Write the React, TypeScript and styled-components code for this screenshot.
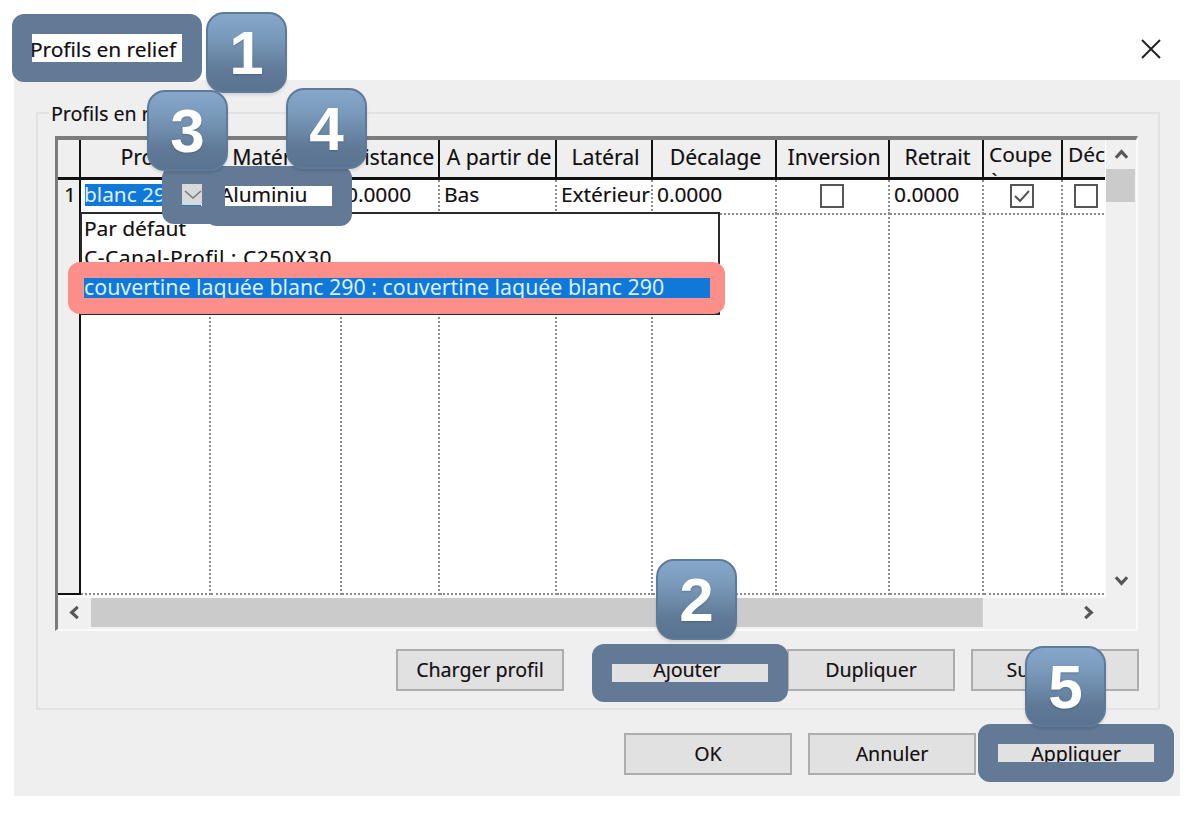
import React from "react";
import styled, { createGlobalStyle } from "styled-components";

const UI_FONT = `"Noto Sans", "Open Sans", sans-serif`;

const columnTemplate = "23px 130px 131px 98px 117px 96px 124px 113px 94px 79px 88px";

const headers = [
  "Profil",
  "Matériau",
  "Distance",
  "A partir de",
  "Latéral",
  "Décalage",
  "Inversion",
  "Retrait",
  "Coupe à",
  "Décalé"
];

const Global = createGlobalStyle`
  html, body { margin: 0; padding: 0; background: #fff; }
  body { font-family: ${UI_FONT}; color: #111; }
`;

const Page = styled.div`
  position: relative;
  width: 1204px;
  height: 814px;
  overflow: hidden;
  background: #fff;
  font-size: 19.5px;
  text-shadow: 0.4px 0 0.5px rgba(60, 20, 60, 0.35);
`;

const TitleBar = styled.div`
  height: 80px;
  display: flex;
  align-items: flex-start;
  justify-content: space-between;
  box-sizing: border-box;
  padding: 36px 43px 0 30px;
`;

const TitleText = styled.div`
  font-size: 20.8px;
  line-height: 26px;
`;

const CloseIcon = styled.svg`
  width: 20px;
  height: 20px;
  margin-top: 3px;
`;

const Panel = styled.div`
  width: 1166px;
  height: 716px;
  margin-left: 14px;
  box-sizing: border-box;
  padding: 32px 20px 0 22px;
  background: #efefef;
`;

const GroupBox = styled.div`
  position: relative;
  height: 598px;
  box-sizing: border-box;
  padding: 22px 20px 0 17px;
  border: 2px solid #e2e2e2;
`;

const Legend = styled.div`
  position: absolute;
  left: 11px;
  top: -12px;
  padding: 0 2px;
  line-height: 24px;
  background: #efefef;
`;

const TableFrame = styled.div`
  height: 495px;
  box-sizing: border-box;
  display: flex;
  flex-direction: column;
  border-top: 4px solid #7c7c7c;
  border-left: 3px solid #7c7c7c;
  border-right: 2px solid #fafafa;
  border-bottom: 2px solid #fafafa;
  background: #f0f0f0;
`;

const TableBody = styled.div`
  height: 458px;
  display: flex;
`;

const Grid = styled.div`
  width: 1047px;
  height: 455px;
  display: flex;
  flex-direction: column;
  overflow: hidden;
  background: #fff;
  border-bottom: 3px solid #fafafa;
  font-size: 20.8px;
`;

const Row = styled.div<{ $fill?: boolean; $height?: number }>`
  display: grid;
  grid-template-columns: ${columnTemplate};
  flex: ${(p) => (p.$fill ? "1" : "none")};
  height: ${(p) => (p.$height ? `${p.$height}px` : "auto")};
`;

const HeaderCell = styled.div<{ $top?: boolean }>`
  box-sizing: border-box;
  overflow: hidden;
  display: flex;
  justify-content: ${(p) => (p.$top ? "flex-start" : "center")};
  align-items: ${(p) => (p.$top ? "flex-start" : "center")};
  padding: ${(p) => (p.$top ? "1px 0 0 5px" : "0 0 4px 3px")};
  font-size: ${(p) => (p.$top ? "20.8px" : "21.1px")};
  line-height: 26px;
  background: #efefef;
  border-right: 2px solid #111;
  border-bottom: 3px solid #111;
  white-space: ${(p) => (p.$top ? "normal" : "nowrap")};
`;

const RowHeadCell = styled.div<{ $last?: boolean }>`
  box-sizing: border-box;
  display: flex;
  align-items: center;
  padding-left: 6px;
  padding-bottom: 5px;
  background: #efefef;
  border-right: 2px solid #111;
  border-bottom: 2px solid ${(p) => (p.$last ? "#111" : "#333")};
`;

const Cell = styled.div<{ $center?: boolean; $inset?: number }>`
  box-sizing: border-box;
  display: flex;
  align-items: center;
  justify-content: ${(p) => (p.$center ? "center" : "flex-start")};
  padding-left: ${(p) => (p.$center ? 0 : p.$inset ?? 4)}px;
  padding-right: ${(p) => (p.$center ? 2 : 0)}px;
  padding-bottom: 5px;
  white-space: nowrap;
  overflow: hidden;
  border-right: 2px dotted #8c8c8c;
  border-bottom: 2px dotted #8c8c8c;
`;

const FirstCell = styled(Cell)`
  position: relative;
  padding-left: 4px;
  padding-bottom: 3px;
  justify-content: space-between;
`;

const SelectedValue = styled.span`
  display: block;
  height: 22px;
  line-height: 21px;
  width: 116px;
  text-indent: -1px;
  background: #0f78d8;
  color: #dff0ff;
  text-shadow: none;
`;

const ComboButton = styled.span`
  position: absolute;
  left: 100px;
  top: 3px;
  width: 24px;
  height: 22px;
  display: flex;
  align-items: center;
  justify-content: center;
  background: #d9d9d9;
`;

const Checkbox = styled.span`
  width: 24px;
  height: 24px;
  box-sizing: border-box;
  display: flex;
  align-items: center;
  justify-content: center;
  margin-top: 3px;
  background: #fff;
  border: 2px solid #555;
`;

const BodyCell = styled.div`
  box-sizing: border-box;
  border-right: 2px dotted #8c8c8c;
  border-bottom: 2px dotted #8c8c8c;
`;

const Dropdown = styled.div`
  position: absolute;
  left: 80px;
  top: 212px;
  width: 640px;
  height: 103px;
  box-sizing: border-box;
  padding: 0 7px 0 2px;
  background: #fff;
  border: 2px solid #2a2a2a;
  font-size: 20.8px;
  line-height: 29px;
`;

const DropdownItem = styled.div<{ $selected?: boolean; $spacing?: number }>`
  height: 29px;
  white-space: nowrap;
  letter-spacing: ${(p) => p.$spacing ?? 0}px;
  ${(p) =>
    p.$selected
      ? `background: #0f78d8; color: #dcefff; text-shadow: none; height: 20px; line-height: 18px; margin-top: 6px; margin-right: 1px; border-bottom: 2px solid #e8111b; font-size: 21.35px;`
      : ""}
`;

const VScroll = styled.div`
  width: 31px;
  display: flex;
  flex-direction: column;
  border-left: 1px solid #fff;
  box-sizing: border-box;
`;

const ScrollArrow = styled.div<{ $size: number; $vertical?: boolean }>`
  flex: none;
  display: flex;
  align-items: center;
  justify-content: center;
  ${(p) => (p.$vertical ? `height: ${p.$size}px;` : `width: ${p.$size}px;`)}
`;

const VThumb = styled.div`
  width: 29px;
  height: 33px;
  background: #cbcbcb;
`;

const Spacer = styled.div`
  flex: 1;
`;

const HScroll = styled.div`
  height: 31px;
  display: flex;
  align-items: stretch;
  padding-bottom: 2px;
  box-sizing: border-box;
`;

const HThumb = styled.div`
  width: 892px;
  background: #cbcbcb;
`;

const ButtonRow = styled.div`
  display: flex;
  justify-content: flex-end;
  gap: 16px;
  margin-top: 18px;
  margin-right: -1px;
`;

const FooterRow = styled(ButtonRow)`
  margin-top: 23px;
  margin-right: 0;
`;

const DialogButton = styled.div<{ $gapAfter?: number }>`
  width: 168px;
  height: 42px;
  box-sizing: border-box;
  display: flex;
  align-items: center;
  justify-content: center;
  padding-bottom: 2px;
  background: #e1e1e1;
  border: 2px solid #adadad;
  margin-right: ${(p) => p.$gapAfter ?? 0}px;
`;

/* annotation overlays drawn over the dialog */
const Ring = styled.div<{ $x: number; $y: number; $w: number; $h: number; $color?: string; $b?: string }>`
  position: absolute;
  left: ${(p) => p.$x}px;
  top: ${(p) => p.$y}px;
  width: ${(p) => p.$w}px;
  height: ${(p) => p.$h}px;
  box-sizing: border-box;
  border-style: solid;
  border-width: ${(p) => p.$b ?? "20px"};
  border-color: ${(p) => p.$color ?? "#627a96"};
  border-radius: 12px;
`;

const Badge = styled.div<{ $x: number; $y: number }>`
  position: absolute;
  left: ${(p) => p.$x}px;
  top: ${(p) => p.$y}px;
  width: 81px;
  height: 81px;
  box-sizing: border-box;
  display: flex;
  align-items: center;
  justify-content: center;
  border-radius: 18px;
  border: 2px solid #5f7a98;
  background: linear-gradient(180deg, #86a7ca 0%, #7a9abb 30%, #5f7996 75%, #5a7390 100%);
  box-shadow: 0 2px 3px rgba(0, 0, 0, 0.12);
  color: #fff;
  font-family: "Liberation Sans", Arial, sans-serif;
  font-weight: 700;
  font-size: 62px;
  line-height: 1;
  text-shadow: 0 1px 2px rgba(40, 60, 90, 0.35);
`;

const Chevron = ({ dir, size = 15 }: { dir: "up" | "down" | "left" | "right"; size?: number }) => {
  const rotate = { up: 0, right: 90, down: 180, left: 270 }[dir];
  return (
    <svg width={size} height={size} viewBox="0 0 16 16" style={{ transform: `rotate(${rotate}deg)` }}>
      <path d="M2 11.5 L8 5 L14 11.5" fill="none" stroke="#575757" strokeWidth="3.4" />
    </svg>
  );
};

const App = () => {
  return (
    <Page>
      <Global />
      <TitleBar>
        <TitleText>Profils en relief</TitleText>
        <CloseIcon viewBox="0 0 20 20">
          <path d="M1 1 L19 19 M19 1 L1 19" stroke="#222" strokeWidth="2" fill="none" />
        </CloseIcon>
      </TitleBar>

      <Panel>
        <GroupBox>
          <Legend>Profils en relief</Legend>
          <TableFrame>
            <TableBody>
              <Grid>
                <Row $height={40}>
                  <HeaderCell />
                  {headers.map((h, i) => (
                    <HeaderCell key={i} $top={i >= 8}>
                      {h}
                    </HeaderCell>
                  ))}
                </Row>
                <Row $height={32}>
                  <RowHeadCell>1</RowHeadCell>
                  <FirstCell>
                    <SelectedValue>blanc 290</SelectedValue>
                    <ComboButton>
                      <svg width="18" height="12" viewBox="0 0 18 12">
                        <path d="M1 3 L9 10 L17 3" fill="none" stroke="#7a7a7a" strokeWidth="1.6" />
                      </svg>
                    </ComboButton>
                  </FirstCell>
                  <Cell $inset={9}>Aluminiu</Cell>
                  <Cell>0.0000</Cell>
                  <Cell>Bas</Cell>
                  <Cell>Extérieur</Cell>
                  <Cell>0.0000</Cell>
                  <Cell $center>
                    <Checkbox />
                  </Cell>
                  <Cell>0.0000</Cell>
                  <Cell $center>
                    <Checkbox>
                      <svg width="18" height="18" viewBox="0 0 18 18">
                        <path d="M2 9 L7 14 L16 4" fill="none" stroke="#555" strokeWidth="2" />
                      </svg>
                    </Checkbox>
                  </Cell>
                  <Cell $inset={11}>
                    <Checkbox />
                  </Cell>
                </Row>
                <Row $fill>
                  <RowHeadCell $last />
                  {headers.map((h) => (
                    <BodyCell key={h} />
                  ))}
                </Row>
              </Grid>
              <VScroll>
                <ScrollArrow $vertical $size={29}>
                  <Chevron dir="up" />
                </ScrollArrow>
                <VThumb />
                <Spacer />
                <ScrollArrow $vertical $size={36}>
                  <Chevron dir="down" />
                </ScrollArrow>
              </VScroll>
            </TableBody>
            <HScroll>
              <ScrollArrow $size={33}>
                <Chevron dir="left" />
              </ScrollArrow>
              <HThumb />
              <Spacer />
              <ScrollArrow $size={33}>
                <Chevron dir="right" />
              </ScrollArrow>
              <ScrollArrow $size={31} />
            </HScroll>
          </TableFrame>
          <ButtonRow>
            <DialogButton $gapAfter={23}>Charger profil</DialogButton>
            <DialogButton>Ajouter</DialogButton>
            <DialogButton>Dupliquer</DialogButton>
            <DialogButton>Supprimer</DialogButton>
          </ButtonRow>
        </GroupBox>
        <FooterRow>
          <DialogButton>OK</DialogButton>
          <DialogButton>Annuler</DialogButton>
          <DialogButton>Appliquer</DialogButton>
        </FooterRow>
      </Panel>

      <Dropdown>
        <DropdownItem>Par défaut</DropdownItem>
        <DropdownItem $spacing={0.6}>C-Canal-Profil : C250X30</DropdownItem>
        <DropdownItem $selected>couvertine laquée blanc 290 : couvertine laquée blanc 290</DropdownItem>
      </Dropdown>

      <Ring $x={12} $y={14} $w={190} $h={68} />
      <Ring $x={68} $y={262} $w={657} $h={52} $color="#fd8f8a" $b="16px 15px 16px 16px" />
      <Ring $x={162} $y={166} $w={60} $h={58} $b="18px 20px" />
      <Ring $x={205} $y={166} $w={147} $h={60} />
      <Ring $x={592} $y={644} $w={196} $h={58} />
      <Ring $x={978} $y={724} $w={196} $h={58} />

      <Badge $x={206} $y={12}>1</Badge>
      <Badge $x={656} $y={559}>2</Badge>
      <Badge $x={147} $y={90}>3</Badge>
      <Badge $x={286} $y={88}>4</Badge>
      <Badge $x={1025} $y={646}>5</Badge>
    </Page>
  );
};

export default App;
